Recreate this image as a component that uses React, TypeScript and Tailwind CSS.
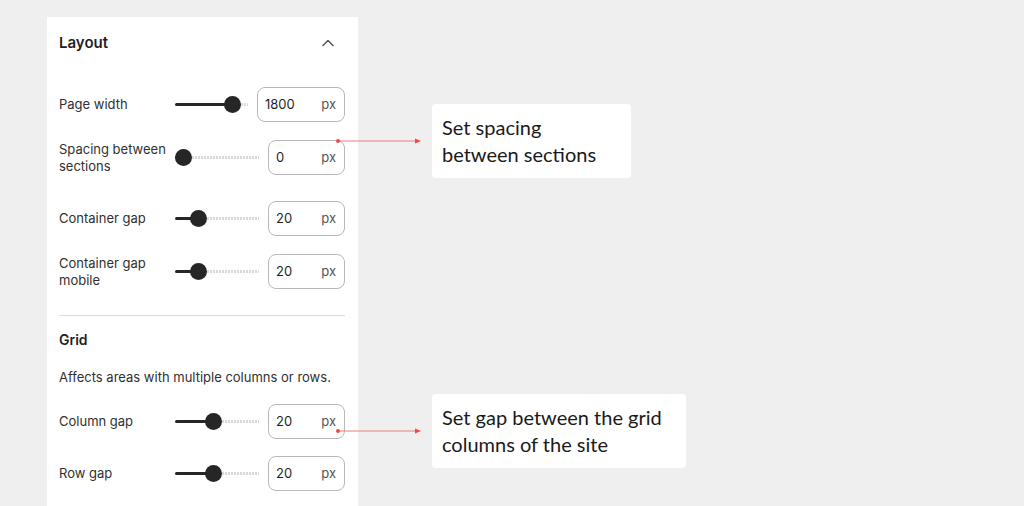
import React from "react";

type Row = {
  label: string;
  value: string;
  thumb: number;
  wide?: boolean;
  mt: string;
};

function Slider({ thumb }: { thumb: number }) {
  return (
    <div className="relative h-[16px] flex-1">
      <div
        className="absolute top-[6.5px] right-0 h-[3px] bg-[repeating-linear-gradient(90deg,#d9d9d9_0_2px,transparent_2px_3px)]"
        style={{ left: thumb + 8 }}
      />
      <div
        className="absolute top-[6.5px] left-0 h-[3px] rounded-full bg-[#262626]"
        style={{ width: thumb + 8 }}
      />
      <div
        className="absolute -top-[0.5px] h-[17px] w-[17px] rounded-full bg-[#262626]"
        style={{ left: thumb }}
      />
    </div>
  );
}

function SettingRow({ row }: { row: Row }) {
  return (
    <div className={`flex items-center ${row.mt}`}>
      <div className="w-[116px] shrink-0 pr-1 text-[13px] leading-[17px] text-[#303030]">
        {row.label}
      </div>
      <Slider thumb={row.thumb} />
      <div
        className={`ml-[9px] flex h-[35px] shrink-0 items-center justify-between rounded-[8px] border border-[#b8b8b8] pl-[7px] pr-[8px] text-[13px] ${
          row.wide ? "w-[88px]" : "w-[77px]"
        }`}
      >
        <span className="text-[#1f1f1f]">{row.value}</span>
        <span className="text-[#555555]">px</span>
      </div>
    </div>
  );
}

function Annotation({ lines, width }: { lines: string[]; width: string }) {
  return (
    <div className="flex items-center gap-[11px]">
      <svg width="86" height="8" viewBox="0 0 86 8" className="block">
        <line x1="3" y1="4" x2="82" y2="4" stroke="#f07c7c" strokeWidth="1" />
        <circle cx="3" cy="4" r="2" fill="#f04848" />
        <path d="M80 1.5 L86 4 L80 6.5 Z" fill="#f04848" />
      </svg>
      <div
        className={`flex h-[74px] flex-col justify-center rounded-[4px] bg-white px-[10px] pb-[1px] text-[20px] leading-[27px] text-[#1a1a1a] ${width}`}
        style={{ fontFamily: "Lato, 'Noto Sans', sans-serif" }}
      >
        {lines.map((l) => (
          <span key={l}>{l}</span>
        ))}
      </div>
    </div>
  );
}

export default function App() {
  const layoutRows: Row[] = [
    { label: "Page width", value: "1800", thumb: 49, wide: true, mt: "mt-[18px]" },
    { label: "Spacing between sections", value: "0", thumb: 0, mt: "mt-[18px]" },
    { label: "Container gap", value: "20", thumb: 15, mt: "mt-[26px]" },
    { label: "Container gap mobile", value: "20", thumb: 15, mt: "mt-[18px]" },
  ];
  const gridRows: Row[] = [
    { label: "Column gap", value: "20", thumb: 30, mt: "mt-[18px]" },
    { label: "Row gap", value: "20", thumb: 30, mt: "mt-[17px]" },
  ];

  return (
    <div
      className="relative h-[506px] w-[1024px] overflow-hidden bg-[#efefef]"
      style={{ fontFamily: "Inter, 'Noto Sans', sans-serif" }}
    >
      <div className="ml-[47px] mt-[17px] h-[489px] w-[311px] bg-white pl-[12px] pr-[13px]">
        <div className="flex h-[52px] items-center justify-between">
          <span className="text-[15px] font-semibold text-[#1f1f1f]">Layout</span>
          <svg width="12" height="8" viewBox="0 0 12 8" className="mr-[11px]">
            <path
              d="M1 6.5 L6 1.5 L11 6.5"
              fill="none"
              stroke="#555555"
              strokeWidth="1.5"
              strokeLinecap="round"
              strokeLinejoin="round"
            />
          </svg>
        </div>
        {layoutRows.map((r) => (
          <SettingRow key={r.label} row={r} />
        ))}
        <div className="mt-[26px] h-px bg-[#dcdcdc]" />
        <div className="mt-[14px] text-[14px] font-semibold leading-[20px] text-[#1f1f1f]">
          Grid
        </div>
        <div className="mt-[18px] text-[13px] leading-[18px] text-[#303030]">
          Affects areas with multiple columns or rows.
        </div>
        {gridRows.map((r) => (
          <SettingRow key={r.label} row={r} />
        ))}
      </div>

      <div className="absolute left-[335px] top-[104px]">
        <Annotation lines={["Set spacing", "between sections"]} width="w-[199px]" />
      </div>
      <div className="absolute left-[335px] top-[394px]">
        <Annotation lines={["Set gap between the grid", "columns of the site"]} width="w-[254px]" />
      </div>
    </div>
  );
}
